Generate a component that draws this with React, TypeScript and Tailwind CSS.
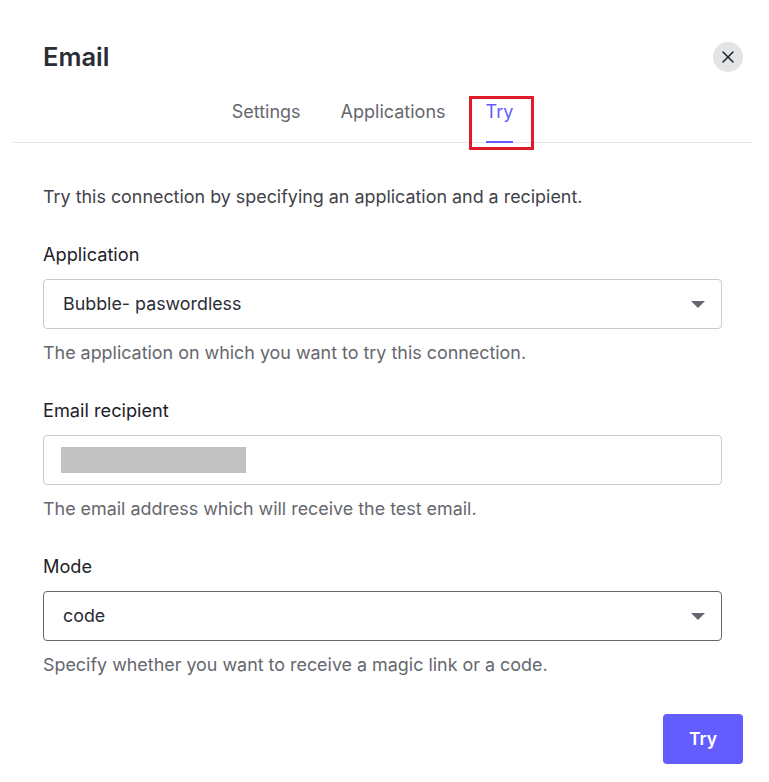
import type { ReactNode } from 'react';
import { X } from 'lucide-react';

function Caret() {
  return (
    <svg width="14" height="7" viewBox="0 0 14 7" className="flex-shrink-0">
      <path d="M0 0h14L7 7z" fill="#65676e" />
    </svg>
  );
}

function Field({ label, hint, focused, children, caret }: { label: string; hint: string; focused?: boolean; children: ReactNode; caret?: boolean }) {
  return (
    <div className="flex flex-col">
      <label className="text-[18.2px] leading-[22px] font-normal text-[#1e212a] mb-[14px]">{label}</label>
      <div className={`h-[50px] rounded-[4px] border bg-white flex items-center justify-between pl-[19px] pr-[16px] ${focused ? 'border-[#65676e]' : 'border-[#c9cace]'}`}>
        {children}
        {caret && <Caret />}
      </div>
      <p className="text-[17.9px] leading-[24px] text-[#65676e] mt-[12px]">{hint}</p>
    </div>
  );
}

export default function App() {
  return (
    <div className="w-[769px] h-[782px] bg-white font-['Inter',sans-serif] overflow-hidden">
      <div className="ml-[13px] w-[739px] border-b border-[#e6e6e8] h-[143px] flex flex-col">
        <div className="flex items-center justify-between pl-[30px] pr-[9px] pt-[41px]">
          <h1 className="text-[25.5px] leading-[32px] font-semibold text-[#2a2d35]">Email</h1>
          <button className="w-[30px] h-[30px] rounded-full bg-[#e3e4e6] flex items-center justify-center text-[#1e212a]">
            <X className="w-[20px] h-[20px]" strokeWidth={1.75} />
          </button>
        </div>
        <div className="flex justify-center gap-[40px] mt-[27px] pr-[20px] text-[18px] leading-[24px] text-[#65676e]">
          <span>Settings</span>
          <span>Applications</span>
          <div className="relative text-[#635dff]">
            Try
            <div className="h-[2px] bg-[#635dff] mt-[17px]" />
            <div className="absolute -left-[17px] -right-[21px] -top-[4px] -bottom-[7px] border-[3px] border-[#e01b2a]" />
          </div>
        </div>
      </div>
      <div className="pl-[43px] pr-[47px] pt-[42px] flex flex-col">
        <p className="text-[17.9px] leading-[24px] text-[#3f4249] mb-[34px]">Try this connection by specifying an application and a recipient.</p>
        <div className="flex flex-col gap-[34px]">
          <Field label="Application" hint="The application on which you want to try this connection." caret>
            <span className="text-[17.85px] text-[#2a2d35]">Bubble- paswordless</span>
          </Field>
          <Field label="Email recipient" hint="The email address which will receive the test email.">
            <div className="w-[185px] h-[26px] bg-[#c2c2c2] -ml-[2px]" />
          </Field>
          <Field label="Mode" hint="Specify whether you want to receive a magic link or a code." focused caret>
            <span className="text-[17.85px] text-[#2a2d35]">code</span>
          </Field>
        </div>
        <div className="flex justify-end mt-[37px] -mr-[21px]">
          <button className="w-[80px] h-[50px] rounded-[4px] bg-[#635dff] text-white text-[17.5px] font-semibold">Try</button>
        </div>
      </div>
    </div>
  );
}
